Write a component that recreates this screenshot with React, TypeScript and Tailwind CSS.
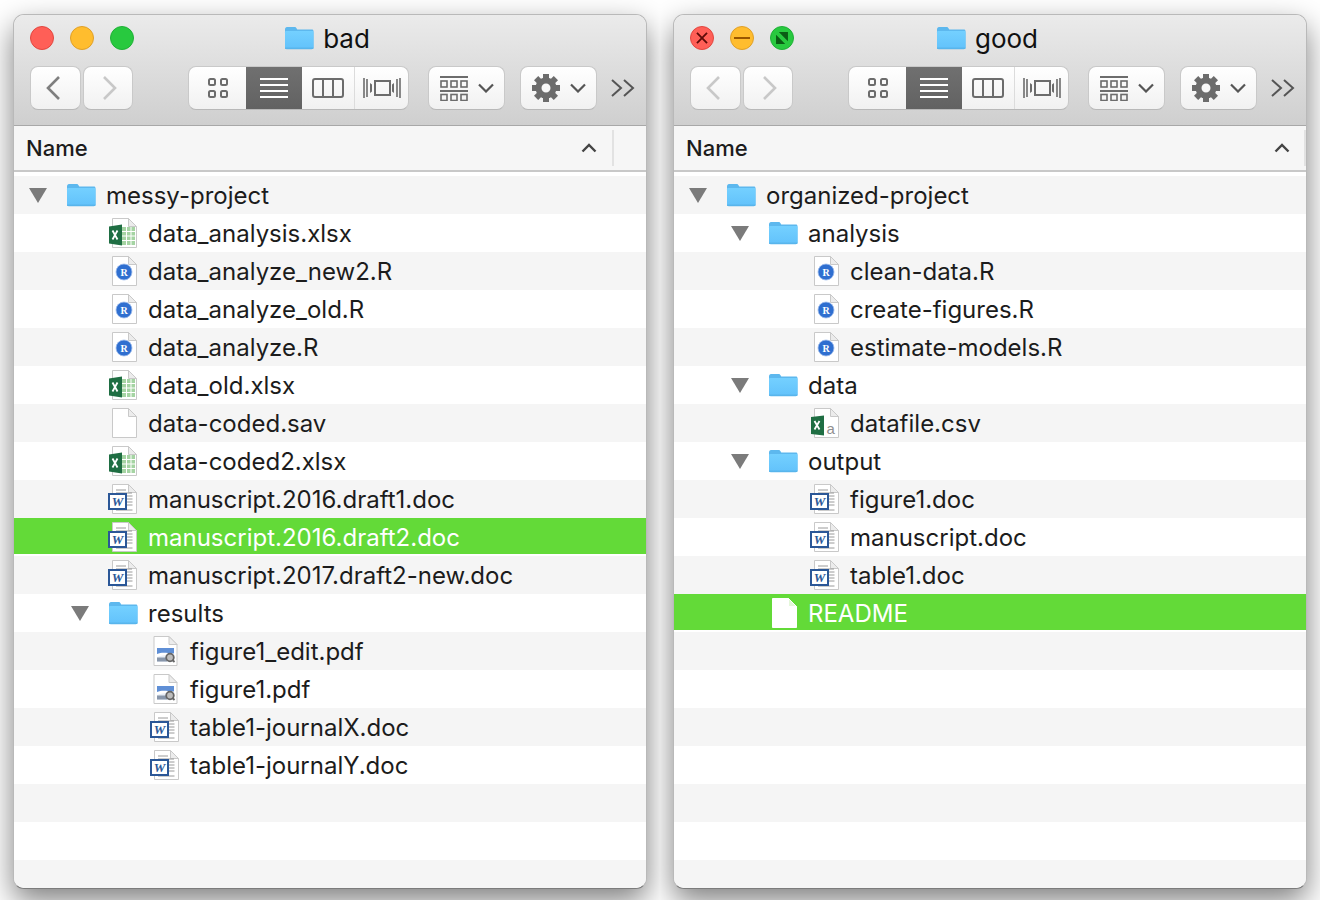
import React from 'react';

type Kind = 'folder' | 'excel' | 'r' | 'blank' | 'word' | 'pdf' | 'csv';

interface Row {
  name: string;
  kind: Kind;
  depth: 0 | 1 | 2;
  open?: boolean;
  selected?: boolean;
}

const messyRows: Row[] = [
  { name: 'messy-project', kind: 'folder', depth: 0, open: true },
  { name: 'data_analysis.xlsx', kind: 'excel', depth: 1 },
  { name: 'data_analyze_new2.R', kind: 'r', depth: 1 },
  { name: 'data_analyze_old.R', kind: 'r', depth: 1 },
  { name: 'data_analyze.R', kind: 'r', depth: 1 },
  { name: 'data_old.xlsx', kind: 'excel', depth: 1 },
  { name: 'data-coded.sav', kind: 'blank', depth: 1 },
  { name: 'data-coded2.xlsx', kind: 'excel', depth: 1 },
  { name: 'manuscript.2016.draft1.doc', kind: 'word', depth: 1 },
  { name: 'manuscript.2016.draft2.doc', kind: 'word', depth: 1, selected: true },
  { name: 'manuscript.2017.draft2-new.doc', kind: 'word', depth: 1 },
  { name: 'results', kind: 'folder', depth: 1, open: true },
  { name: 'figure1_edit.pdf', kind: 'pdf', depth: 2 },
  { name: 'figure1.pdf', kind: 'pdf', depth: 2 },
  { name: 'table1-journalX.doc', kind: 'word', depth: 2 },
  { name: 'table1-journalY.doc', kind: 'word', depth: 2 },
];

const goodRows: Row[] = [
  { name: 'organized-project', kind: 'folder', depth: 0, open: true },
  { name: 'analysis', kind: 'folder', depth: 1, open: true },
  { name: 'clean-data.R', kind: 'r', depth: 2 },
  { name: 'create-figures.R', kind: 'r', depth: 2 },
  { name: 'estimate-models.R', kind: 'r', depth: 2 },
  { name: 'data', kind: 'folder', depth: 1, open: true },
  { name: 'datafile.csv', kind: 'csv', depth: 2 },
  { name: 'output', kind: 'folder', depth: 1, open: true },
  { name: 'figure1.doc', kind: 'word', depth: 2 },
  { name: 'manuscript.doc', kind: 'word', depth: 2 },
  { name: 'table1.doc', kind: 'word', depth: 2 },
  { name: 'README', kind: 'blank', depth: 1, selected: true },
];

const TOTAL_ROWS = 19;

function FolderIcon({ className }: { className?: string }) {
  return (
    <svg viewBox="0 0 30 24" className={className}>
      <defs>
        <linearGradient id="folderBody" x1="0" y1="0" x2="0" y2="1">
          <stop offset="0" stopColor="#74d0ff" />
          <stop offset="1" stopColor="#62c2fb" />
        </linearGradient>
      </defs>
      <path d="M1 3.5C1 2 1.8 1 3 1h7.5c1 0 1.5.4 2 1.2l.8 1.3H28c.8 0 1.5.7 1.5 1.5v16.5c0 1-.8 1.7-1.7 1.7H2.7c-1 0-1.7-.8-1.7-1.7z" fill="#5db8ee" />
      <path d="M1 6.2c0-.7.6-1.2 1.2-1.2h26c.7 0 1.3.5 1.3 1.2v15.3c0 .8-.7 1.5-1.5 1.5H2.5C1.7 23 1 22.3 1 21.5z" fill="url(#folderBody)" />
      <path d="M1 22.2h28.5" stroke="#4fa8dc" strokeWidth="1" opacity="0.7" />
    </svg>
  );
}

function DocPage({ white, x = 4.5, right = 28.5 }: { white?: boolean; x?: number; right?: number }) {
  return (
    <>
      <path
        d={`M${x} 1.5h${right - x - 8}l8 8v21h-${right - x}z`}
        fill="#ffffff"
        stroke={white ? '#ffffff' : '#c9c9c9'}
        strokeWidth="1"
      />
      <path d={`M${right - 8} 1.5v8h8z`} fill={white ? '#e4f7da' : '#ececec'} stroke={white ? '#ffffff' : '#c9c9c9'} strokeWidth="1" />
    </>
  );
}

function FileIcon({ kind, selected }: { kind: Kind; selected?: boolean }) {
  return (
    <svg viewBox="0 0 30 32" className="h-[32px] w-[30px] shrink-0">
      {kind === 'blank' && <DocPage white={selected} />}
      {kind === 'r' && (
        <>
          <DocPage />
          <circle cx="16" cy="17" r="8" fill="#2f6fd0" />
          <circle cx="16" cy="17" r="8" fill="none" stroke="#9fbdec" strokeWidth="0.8" />
          <text x="16" y="20.5" textAnchor="middle" fontSize="10" fontWeight="700" fill="#ffffff" fontFamily="Liberation Serif, serif">
            R
          </text>
        </>
      )}
      {kind === 'excel' && (
        <>
          <DocPage />
          <rect x="14" y="10" width="13" height="18" fill="#a5d4a3" />
          <path d="M14 14.5h13M14 19h13M14 23.5h13M18.5 10v18M23 10v18" stroke="#ffffff" strokeWidth="1" />
          <path d="M1 9.5l13-2v21l-13-2z" fill="#1f6e43" />
          <path d="M4.5 13.5l5 9M9.5 13.5l-5 9" stroke="#ffffff" strokeWidth="1.8" />
        </>
      )}
      {kind === 'csv' && (
        <>
          <DocPage />
          <path d="M1 10l13-1.5v20l-13-1.5z" fill="#1f6e43" />
          <path d="M4.5 14l5 8.500M9.500 14l-5 8.500" stroke="#ffffff" strokeWidth="1.8" />
          <text x="16.500" y="27" fontSize="15" fill="#8f8f8f" fontFamily="Liberation Sans, sans-serif">
            a
          </text>
        </>
      )}
      {kind === 'word' && (
        <>
          <DocPage />
          <path d="M8 7h10M8 10h16M19 13h5.500M19 16h5.500M19 19h5.500M19 22h5.500M8 27h16.500" stroke="#9a9a9a" strokeWidth="1" />
          <rect x="1" y="11" width="17" height="15" fill="#ffffff" stroke="#2b5797" strokeWidth="2" />
          <text x="9.500" y="23" textAnchor="middle" fontSize="13" fontWeight="700" fontStyle="italic" fill="#2b5797" fontFamily="Liberation Serif, serif">
            W
          </text>
        </>
      )}
      {kind === 'pdf' && (
        <>
          <DocPage x={4} right={27} />
          <rect x="7" y="13" width="17" height="14" rx="1" fill="#e8edf5" />
          <path d="M7 13h17v6H7z" fill="#5f8fd6" />
          <path d="M7 19c5-2 9-1 17-.5v2.500c-7-1-12-1-17 1z" fill="#ffffff" />
          <path d="M7 22.500h10v4H7z" fill="#8896aa" />
          <circle cx="20" cy="22.500" r="3.800" fill="#bdbdbd" stroke="#666666" strokeWidth="1.800" />
          <path d="M22.500 25l2 2" stroke="#666666" strokeWidth="1.800" />
        </>
      )}
    </svg>
  );
}

function TrafficLights({ active }: { active: boolean }) {
  return (
    <div className="flex items-center gap-[16px]">
      <span className="flex h-[24px] w-[24px] items-center justify-center rounded-full border border-[#e2473f] bg-[#ff5f57]">
        {active && (
          <svg viewBox="0 0 24 24" className="h-[24px] w-[24px]">
            <path d="M6.500 6.500l11 11M17.500 6.500l-11 11" stroke="#5e0b08" strokeWidth="2" />
          </svg>
        )}
      </span>
      <span className="flex h-[24px] w-[24px] items-center justify-center rounded-full border border-[#e0a028] bg-[#ffbd2e]">
        {active && <span className="h-[2px] w-[16px] bg-[#995700]" />}
      </span>
      <span className="flex h-[24px] w-[24px] items-center justify-center rounded-full border border-[#1fb137] bg-[#28c93f]">
        {active && (
          <svg viewBox="0 0 24 24" className="h-[24px] w-[24px]">
            <path d="M8.500 5.500H18.500V15.500zM5.500 8.500V18.500H15.500z" fill="#0a5c14" />
          </svg>
        )}
      </span>
    </div>
  );
}

function Chevron({ dir, color }: { dir: 'left' | 'right'; color: string }) {
  return (
    <svg viewBox="0 0 16 26" className="h-[26px] w-[16px]">
      <path d={dir === 'left' ? 'M14 2L3 13l11 11' : 'M2 2l11 11L2 24'} fill="none" stroke={color} strokeWidth="2.600" />
    </svg>
  );
}

const buttonClass =
  'flex h-[44px] items-center justify-center rounded-[8px] border border-[#c9c9c9] border-b-[#b8b8b8] bg-gradient-to-b from-[#ffffff] to-[#f1f1f1]';

function GearIcon() {
  return (
    <svg viewBox="0 0 28 28" className="h-[28px] w-[28px]">
      {[0, 45, 90, 135, 180, 225, 270, 315].map((a) => (
        <rect key={a} x="11" y="0" width="6" height="6" fill="#6c6c6c" transform={`rotate(${a} 14 14)`} />
      ))}
      <circle cx="14" cy="14" r="7.500" fill="none" stroke="#6c6c6c" strokeWidth="6" />
    </svg>
  );
}

function Toolbar({ title, active }: { title: string; active: boolean }) {
  return (
    <div className="h-[111px] shrink-0 border-b border-[#a8a8a8] bg-gradient-to-b from-[#ebebeb] to-[#cfcfcf]">
      <div className="grid h-[46px] grid-cols-[1fr_auto_1fr] items-center px-[16px]">
        <TrafficLights active={active} />
        <div className="flex items-center gap-[9px] pr-[6px]">
          <FolderIcon className="h-[24px] w-[30px]" />
          <span className="pt-[2px] text-[26px] leading-none text-[#111111]">{title}</span>
        </div>
        <div />
      </div>
      <div className="mt-[5px] flex items-center pl-[16px]">
        <div className={`${buttonClass} w-[51px] pr-[5px]`}>
          <Chevron dir="left" color={active ? '#c8c8c8' : '#7f7f7f'} />
        </div>
        <div className={`${buttonClass} ml-[2px] w-[50px] pl-[3px]`}>
          <Chevron dir="right" color="#c8c8c8" />
        </div>

        <div className={`${buttonClass} ml-[55px] w-[221px] overflow-hidden`}>
          <div className="flex h-full w-[57px] items-center justify-center">
            <svg viewBox="0 0 20 20" className="h-[20px] w-[20px]">
              <rect x="1" y="1" width="6" height="6" rx="1.500" fill="none" stroke="#6c6c6c" strokeWidth="2" />
              <rect x="13" y="1" width="6" height="6" rx="1.500" fill="none" stroke="#6c6c6c" strokeWidth="2" />
              <rect x="1" y="13" width="6" height="6" rx="1.500" fill="none" stroke="#6c6c6c" strokeWidth="2" />
              <rect x="13" y="13" width="6" height="6" rx="1.500" fill="none" stroke="#6c6c6c" strokeWidth="2" />
            </svg>
          </div>
          <div className="flex h-full w-[56px] items-center justify-center bg-gradient-to-b from-[#707070] to-[#626262]">
            <svg viewBox="0 0 28 20" className="h-[20px] w-[28px]">
              <path d="M0 1h28M0 7h28M0 13h28M0 19h28" stroke="#ffffff" strokeWidth="2" />
            </svg>
          </div>
          <div className="flex h-full w-[53px] items-center justify-center border-r border-[#dcdcdc]">
            <svg viewBox="0 0 32 20" className="h-[20px] w-[32px]">
              <rect x="1" y="1" width="30" height="18" rx="2" fill="none" stroke="#6c6c6c" strokeWidth="2" />
              <path d="M11 1v18M21 1v18" stroke="#6c6c6c" strokeWidth="2" />
            </svg>
          </div>
          <div className="flex h-full flex-1 items-center justify-center">
            <svg viewBox="0 0 38 20" className="h-[20px] w-[38px]">
              <path d="M1 0v20M4 1v18M34 1v18M37 0v20" stroke="#6c6c6c" strokeWidth="1.600" />
              <rect x="12" y="3" width="15" height="14" fill="none" stroke="#6c6c6c" strokeWidth="2" />
              <path d="M7 5l2 1.500v7L7 15zM31 5l-2 1.500v7l2 1.500z" fill="#6c6c6c" />
            </svg>
          </div>
        </div>

        <div className={`${buttonClass} ml-[19px] w-[77px] gap-[10px]`}>
          <svg viewBox="0 0 28 25" className="h-[25px] w-[28px]">
            <path d="M0 1h28M0 15h28" stroke="#6c6c6c" strokeWidth="2" />
            <g fill="none" stroke="#6c6c6c" strokeWidth="1.600">
              <rect x="1" y="5" width="6" height="6" />
              <rect x="11" y="5" width="6" height="6" />
              <rect x="21" y="5" width="6" height="6" />
              <rect x="1" y="18.500" width="6" height="6" />
              <rect x="11" y="18.500" width="6" height="6" />
              <rect x="21" y="18.500" width="6" height="6" />
            </g>
          </svg>
          <svg viewBox="0 0 16 10" className="h-[10px] w-[16px]">
            <path d="M1 1.500l7 7 7-7" fill="none" stroke="#555555" strokeWidth="2.200" />
          </svg>
        </div>

        <div className={`${buttonClass} ml-[15px] w-[77px] gap-[10px]`}>
          <GearIcon />
          <svg viewBox="0 0 16 10" className="h-[10px] w-[16px]">
            <path d="M1 1.500l7 7 7-7" fill="none" stroke="#555555" strokeWidth="2.200" />
          </svg>
        </div>

        <svg viewBox="0 0 24 18" className="ml-[14px] h-[18px] w-[24px]">
          <path d="M1 1l9 8-9 8M13 1l9 8-9 8" fill="none" stroke="#555555" strokeWidth="2" />
        </svg>
      </div>
    </div>
  );
}

function ColumnHeader({ wide }: { wide: boolean }) {
  return (
    <div className="h-[50px] shrink-0 bg-[#ffffff]">
      <div className="flex h-[46px] items-center border-b-[2px] border-[#c8c8c8] bg-[#f6f6f6] pl-[12px]">
        <span className="pt-[1px] text-[22px] font-medium text-[#1c1c1c]">Name</span>
        <svg viewBox="0 0 16 10" className={`${wide ? 'ml-[526px]' : 'ml-[493px]'} h-[10px] w-[16px]`}>
          <path d="M1.500 8.500l6.500-6.500 6.500 6.500" fill="none" stroke="#444444" strokeWidth="2.400" />
        </svg>
        <span className={`${wide ? 'ml-[14px]' : 'ml-[15px]'} h-[36px] w-[2px] bg-[#e2e2e2]`} />
      </div>
    </div>
  );
}

const depthPadding = ['pl-[15px]', 'pl-[57px]', 'pl-[99px]'];

function TreeRow({ row, index }: { row?: Row; index: number }) {
  const bg = row?.selected
    ? 'border-b-2 border-white bg-[#63da38] pt-[2px]'
    : index % 2 === 0
      ? 'bg-[#f5f5f5]'
      : 'bg-[#ffffff]';
  if (!row) return <div className={`h-[38px] shrink-0 ${bg}`} />;
  return (
    <div className={`flex h-[38px] shrink-0 items-center ${bg} ${depthPadding[row.depth]}`}>
      <span className="flex w-[18px] shrink-0 justify-center">
        {row.open && (
          <svg viewBox="0 0 18 15" className="h-[15px] w-[18px]">
            <path d="M0 0h18L9 15z" fill="#7b7b7b" />
          </svg>
        )}
      </span>
      <span className="ml-[19px] flex w-[30px] shrink-0 justify-center">
        {row.kind === 'folder' ? (
          <FolderIcon className="h-[24px] w-[30px]" />
        ) : (
          <FileIcon kind={row.kind} selected={row.selected} />
        )}
      </span>
      <span className={`ml-[10px] whitespace-nowrap pt-[2px] text-[24px] leading-none ${row.selected ? 'text-[#ffffff]' : 'text-[#1c1c1c]'}`}>
        {row.name}
      </span>
    </div>
  );
}

function FinderWindow({ title, rows, active }: { title: string; rows: Row[]; active: boolean }) {
  const slots = Array.from({ length: TOTAL_ROWS }, (_, i) => i);
  return (
    <div className="h-[900px] w-[660px] overflow-hidden pl-[13px] pt-[14px]">
      <div className="flex h-[875px] w-[634px] flex-col overflow-hidden rounded-[11px] border border-[#b9b9b9] border-b-[#7c7c7c] bg-white shadow-[0_12px_30px_rgba(0,0,0,0.5)]">
        <Toolbar title={title} active={active} />
        <ColumnHeader wide={active} />
        <div className="flex-1 overflow-hidden">
          {slots.map((i) => (
            <TreeRow key={i} row={rows[i]} index={i} />
          ))}
        </div>
      </div>
    </div>
  );
}

export default function App() {
  return (
    <div className="flex h-[900px] w-[1320px] overflow-hidden bg-white font-['Inter',sans-serif]">
      <FinderWindow title="bad" rows={messyRows} active={false} />
      <FinderWindow title="good" rows={goodRows} active={true} />
    </div>
  );
}
